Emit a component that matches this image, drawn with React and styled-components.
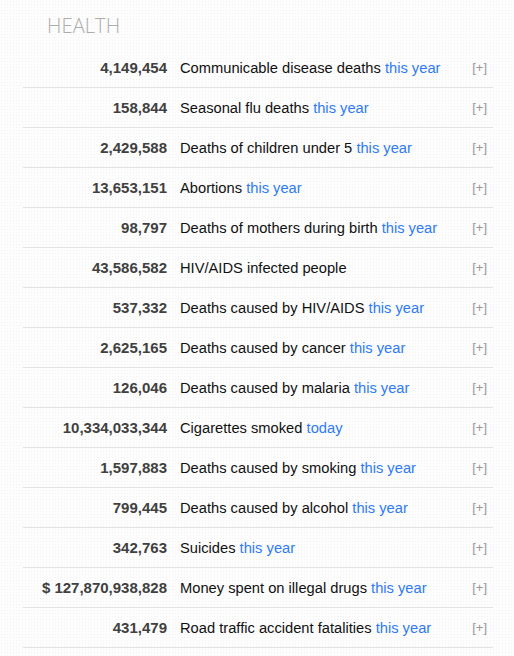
import React from 'react';
import styled, { createGlobalStyle } from 'styled-components';

const GlobalStyle = createGlobalStyle`
  body {
    margin: 0;
    background: #fdfdfd;
    font-family: "Liberation Sans", Arial, sans-serif;
  }
`;

const Panel = styled.div`
  width: 514px;
  height: 656px;
  padding: 0 21px 0 23px;
  box-sizing: border-box;
  background-color: #fdfdfd;
  background-image: radial-gradient(#f1f3f1 0.6px, transparent 0.8px);
  background-size: 3px 3px;
`;

const Heading = styled.h2`
  margin: 0;
  padding: 13px 0 0 24px;
  height: 35px;
  font-family: "Open Sans", "Liberation Sans", sans-serif;
  font-weight: 300;
  font-size: 20px;
  line-height: 26px;
  color: #acacac;
  letter-spacing: 0.1px;
`;

const List = styled.div`
  display: flex;
  flex-direction: column;
`;

const Row = styled.div`
  display: flex;
  align-items: center;
  height: 39px;
  border-bottom: 1px solid #e3e3e3;
  font-size: 15px;
`;

const Count = styled.div`
  width: 144px;
  text-align: right;
  font-weight: bold;
  color: #404040;
  flex-shrink: 0;
`;

const Label = styled.div`
  flex: 1;
  padding-left: 13px;
  font-size: 14.7px;
  color: #111;
  white-space: nowrap;
`;

const Period = styled.span`
  color: #2f7bf5;
`;

const Expand = styled.span`
  font-size: 13px;
  color: #999;
  padding-right: 6px;
`;

const rows = [
  ['4,149,454', 'Communicable disease deaths', 'this year'],
  ['158,844', 'Seasonal flu deaths', 'this year'],
  ['2,429,588', 'Deaths of children under 5', 'this year'],
  ['13,653,151', 'Abortions', 'this year'],
  ['98,797', 'Deaths of mothers during birth', 'this year'],
  ['43,586,582', 'HIV/AIDS infected people', null],
  ['537,332', 'Deaths caused by HIV/AIDS', 'this year'],
  ['2,625,165', 'Deaths caused by cancer', 'this year'],
  ['126,046', 'Deaths caused by malaria', 'this year'],
  ['10,334,033,344', 'Cigarettes smoked', 'today'],
  ['1,597,883', 'Deaths caused by smoking', 'this year'],
  ['799,445', 'Deaths caused by alcohol', 'this year'],
  ['342,763', 'Suicides', 'this year'],
  ['$ 127,870,938,828', 'Money spent on illegal drugs', 'this year'],
  ['431,479', 'Road traffic accident fatalities', 'this year'],
];

export default function App() {
  return (
    <>
      <GlobalStyle />
      <Panel>
        <Heading>HEALTH</Heading>
        <List>
          {rows.map(([count, label, period]) => (
            <Row key={label}>
              <Count>{count}</Count>
              <Label>
                {label}
                {period && <> <Period>{period}</Period></>}
              </Label>
              <Expand>[+]</Expand>
            </Row>
          ))}
        </List>
      </Panel>
    </>
  );
}
